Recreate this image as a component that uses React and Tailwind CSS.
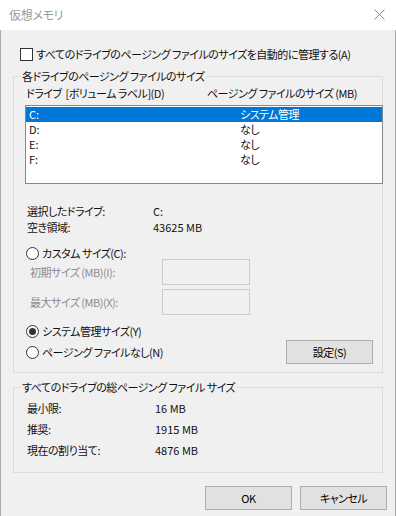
import React from "react";

const drives = [
  { letter: "C:", size: "システム管理", selected: true },
  { letter: "D:", size: "なし" },
  { letter: "E:", size: "なし" },
  { letter: "F:", size: "なし" },
];

const totals = [
  { label: "最小限:", value: "16 MB" },
  { label: "推奨:", value: "1915 MB" },
  { label: "現在の割り当て:", value: "4876 MB" },
];

const Radio = ({ checked, label }) => (
  <div className="flex items-center h-[13px] gap-[3px]">
    <span className="w-[13px] h-[13px] rounded-full border border-[#333333] bg-white flex items-center justify-center shrink-0">
      {checked && <span className="w-[7px] h-[7px] rounded-full bg-[#333333]" />}
    </span>
    <span className="leading-[13px] whitespace-nowrap">{label}</span>
  </div>
);

const Button = ({ children }) => (
  <button className="w-[87px] h-[24px] bg-[#e1e1e1] border border-[#adadad] text-black leading-none">
    {children}
  </button>
);

const App = () => {
  return (
    <div className="w-[396px] h-[516px] bg-[#f0f0f0] text-[11px] tracking-[-0.5px] text-[#111111] font-['Noto_Sans_CJK_JP','Noto_Sans',sans-serif] [font-feature-settings:'palt'] overflow-hidden">
      {/* title bar */}
      <div className="h-[30px] bg-white flex items-center justify-between pl-[9px] pr-[11px]">
        <span className="text-[#9a9a9a] text-[12px] tracking-[-0.3px] leading-none">仮想メモリ</span>
        <svg width="11" height="11" viewBox="0 0 11 11" className="mb-[1px]">
          <path d="M0.5 0.5 L10.5 10.5 M10.5 0.5 L0.5 10.5" stroke="#8a8a8a" strokeWidth="1" fill="none" />
        </svg>
      </div>

      <div className="h-[486px] border-x border-[#aaaaaa] flex flex-col">
        {/* auto manage */}
        <div className="mt-[18px] pl-[19px] flex items-center gap-[3px] h-[13px]">
          <span className="w-[13px] h-[13px] border border-[#333333] bg-white shrink-0" />
          <span className="leading-[13px] whitespace-nowrap">
            すべてのドライブのページング ファイルのサイズを自動的に管理する(A)
          </span>
        </div>

        {/* per drive group */}
        <fieldset className="mt-[8px] ml-[12px] w-[370px] border border-[#dcdcdc] pb-[8px] min-w-0">
          <legend className="ml-[7px] px-[1px] leading-[14px]">各ドライブのページング ファイルのサイズ</legend>

          <div className="mt-[3px] pl-[12px] flex leading-[14px]">
            <span className="w-[181px] whitespace-nowrap">ドライブ&nbsp; [ボリューム ラベル](D)</span>
            <span className="whitespace-nowrap">ページング ファイルのサイズ (MB)</span>
          </div>

          <div className="mt-[5px] ml-[11px] w-[358px] h-[79px] border border-[#828790] bg-white pt-[1px]">
            {drives.map((d) => (
              <div
                key={d.letter}
                className={
                  "flex h-[15px] leading-[15px] pl-[3px] " +
                  (d.selected ? "bg-[#0078d7] text-white" : "text-[#111111]")
                }
              >
                <span className="w-[211px] tracking-normal">{d.letter}</span>
                <span>{d.size}</span>
              </div>
            ))}
          </div>

          <div className="mt-[19px] pl-[13px] leading-[16px]">
            <div className="flex">
              <span className="w-[126px]">選択したドライブ:</span>
              <span className="tracking-normal">C:</span>
            </div>
            <div className="flex">
              <span className="w-[126px]">空き領域:</span>
              <span className="tracking-normal">43625 MB</span>
            </div>
          </div>

          <div className="mt-[12px] pl-[12px]">
            <Radio label="カスタム サイズ(C):" />
          </div>

          <div className="mt-[-1px] flex items-center text-[#8c8c8c]">
            <span className="w-[148px] pl-[16px] whitespace-nowrap">初期サイズ (MB)(I):</span>
            <span className="w-[88px] h-[26px] border border-[#cccccc] bg-[#f0f0f0]" />
          </div>
          <div className="mt-[4px] flex items-center text-[#8c8c8c]">
            <span className="w-[148px] pl-[16px] whitespace-nowrap">最大サイズ (MB)(X):</span>
            <span className="w-[88px] h-[26px] border border-[#cccccc] bg-[#f0f0f0]" />
          </div>

          <div className="mt-[10px] pl-[12px]">
            <Radio checked label="システム管理サイズ(Y)" />
          </div>

          <div className="mt-[2px] pl-[12px] pr-[9px] h-[24px] flex items-center justify-between">
            <Radio label="ページング ファイルなし(N)" />
            <Button>設定(S)</Button>
          </div>
        </fieldset>

        {/* totals group */}
        <fieldset className="mt-[7px] ml-[12px] w-[370px] border border-[#dcdcdc] pb-[11px] min-w-0">
          <legend className="ml-[7px] px-[1px] leading-[14px]">すべてのドライブの総ページング ファイル サイズ</legend>
          <div className="mt-[4px] pl-[13px] leading-[21px]">
            {totals.map((t) => (
              <div key={t.label} className="flex">
                <span className="w-[128px]">{t.label}</span>
                <span className="tracking-normal">{t.value}</span>
              </div>
            ))}
          </div>
        </fieldset>

        <div className="mt-[13px] pr-[8px] flex justify-end gap-[8px]">
          <Button>OK</Button>
          <Button>キャンセル</Button>
        </div>
      </div>
    </div>
  );
};

export default App;
